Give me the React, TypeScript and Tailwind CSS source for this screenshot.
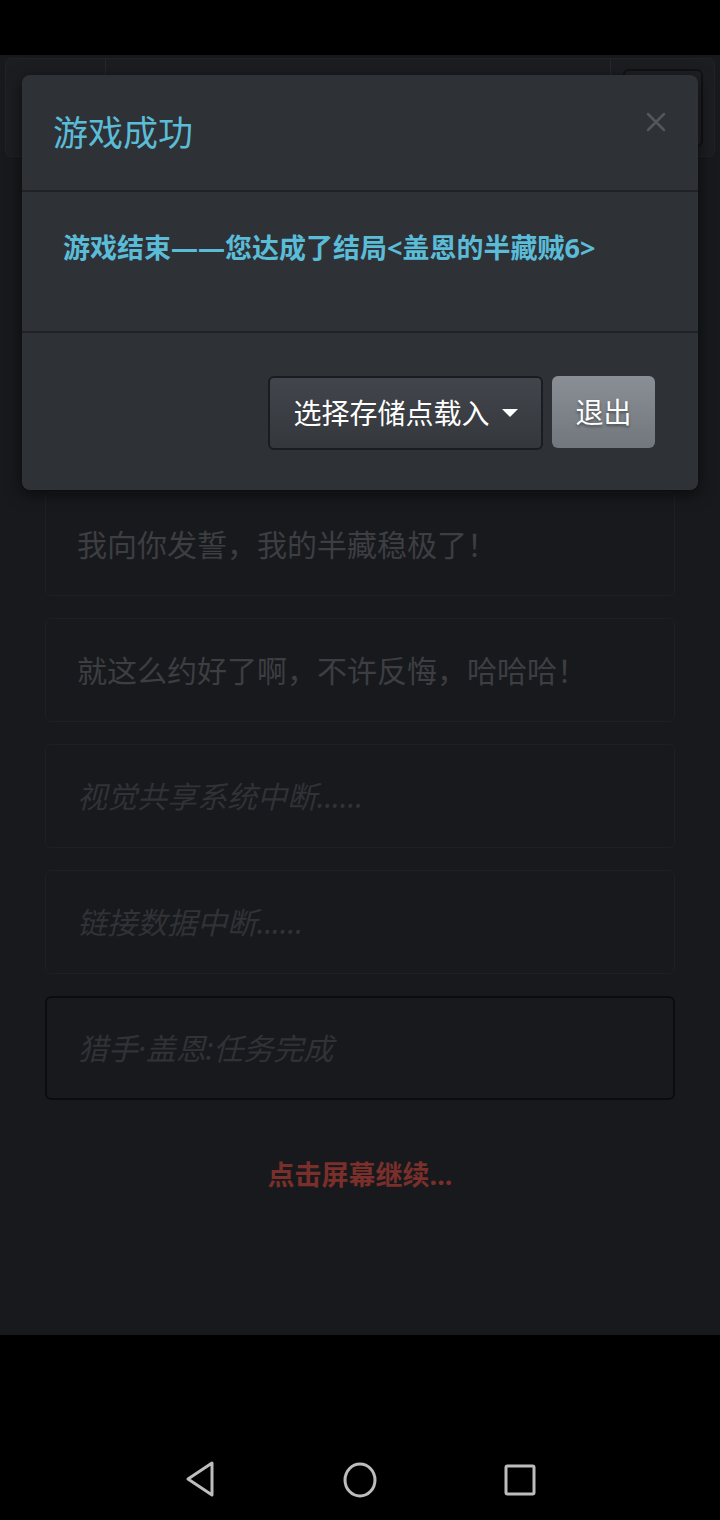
const FONT = "font-['Noto_Sans','Noto_Sans_CJK_SC',sans-serif]";

const LINES: Array<{ text: string; italic?: boolean; strong?: boolean }> = [
  { text: "我向你发誓，我的半藏稳极了！" },
  { text: "就这么约好了啊，不许反悔，哈哈哈！" },
  { text: "视觉共享系统中断......", italic: true },
  { text: "链接数据中断......", italic: true },
  { text: "猎手·盖恩:任务完成", italic: true, strong: true },
];

function StoryCard({ text, italic, strong }: { text: string; italic?: boolean; strong?: boolean }) {
  return (
    <div
      className={`flex h-[104px] items-center rounded-md border bg-[#18191d] px-[31px] ${
        strong ? "border-2 border-[#0b0c0e]" : "border-[#1e2024]"
      }`}
    >
      <p className={`text-[30px] ${italic ? "italic text-[#303236]" : "text-[#3c3e42]"} ${strong ? "text-[#3d3f43]" : ""}`}>
        {text}
      </p>
    </div>
  );
}

function Caret() {
  return <span className="ml-3 inline-block h-0 w-0 border-x-[8px] border-t-[8px] border-x-transparent border-t-white" />;
}

function CloseIcon() {
  return (
    <svg
      className="absolute right-[29px] top-[34px]"
      width="26"
      height="26"
      viewBox="0 0 26 26"
      fill="none"
      stroke="#52575d"
      strokeWidth="2.5"
      strokeLinecap="round"
    >
      <path d="M5 5 L21 21 M21 5 L5 21" />
    </svg>
  );
}

function ResultModal() {
  return (
    <div className="absolute left-[22px] top-[20px] w-[676px] overflow-hidden rounded-lg bg-[#2e3136] shadow-[0_4px_16px_rgba(0,0,0,0.6)]">
      <div className="relative flex h-[117px] items-center border-b-2 border-[#1f2124] px-[31px]">
        <h3 className="text-[35px] leading-none text-[#5bbcd8]">游戏成功</h3>
        <CloseIcon />
      </div>
      <div className="h-[141px] border-b-2 border-[#1f2124] px-[41px] pt-[36px]">
        <p className="text-[27px] font-bold text-[#5bbcd8]">游戏结束——您达成了结局&lt;盖恩的半藏贼6&gt;</p>
      </div>
      <div className="flex h-[157px] items-start justify-end gap-[9px] px-[43px] pt-[43px]">
        <button className="flex h-[74px] w-[275px] items-center justify-center rounded-md border-2 border-[#1a1c1f] bg-gradient-to-b from-[#42454b] to-[#34373c] text-[28px] text-white">
          选择存储点载入
          <Caret />
        </button>
        <button className="h-[72px] w-[103px] rounded-md bg-gradient-to-b from-[#8a8f95] to-[#72777d] text-[28px] text-white [text-shadow:0_2px_3px_rgba(0,0,0,0.4)]">
          退出
        </button>
      </div>
    </div>
  );
}

function NavBar() {
  return (
    <div className="flex h-[185px] items-end justify-center gap-[125px] bg-black pb-[22px]">
      <svg width="34" height="38" viewBox="0 0 34 38" fill="none" stroke="#bdbdbd" strokeWidth="3" strokeLinejoin="round">
        <path d="M29 3 L29 35 L5 19 Z" />
      </svg>
      <svg width="36" height="36" viewBox="0 0 36 36" fill="none" stroke="#bdbdbd" strokeWidth="3">
        <ellipse cx="18" cy="18" rx="15" ry="16" />
      </svg>
      <svg width="34" height="36" viewBox="0 0 34 36" fill="none" stroke="#bdbdbd" strokeWidth="3">
        <rect x="3" y="4" width="28" height="28" rx="1.5" />
      </svg>
    </div>
  );
}

export default function App() {
  return (
    <div className={`flex h-[1520px] w-[720px] flex-col bg-black ${FONT}`}>
      <div className="h-[55px] shrink-0 bg-black" />

      <div className="relative h-[1280px] shrink-0 bg-[#17191c]">
        <div className="mx-[5px] mt-[3px] flex h-[99px] rounded-md border border-[#202226] bg-[#1b1d21]">
          <div className="w-[100px] border-r border-[#25272b]" />
          <div className="flex-1 border-r border-[#25272b]" />
          <div className="flex w-[103px] items-center justify-center">
            <div className="h-[78px] w-[80px] rounded-md border-2 border-[#111214] bg-[#1e2024]" />
          </div>
        </div>

        <div className="mx-[45px] mt-[335px] flex flex-col gap-[22px]">
          {LINES.map((line) => (
            <StoryCard key={line.text} {...line} />
          ))}
        </div>

        <p className="mt-[55px] text-center text-[27px] font-bold text-[#7b2f2b]">点击屏幕继续...</p>

        <ResultModal />
      </div>

      <NavBar />
    </div>
  );
}
